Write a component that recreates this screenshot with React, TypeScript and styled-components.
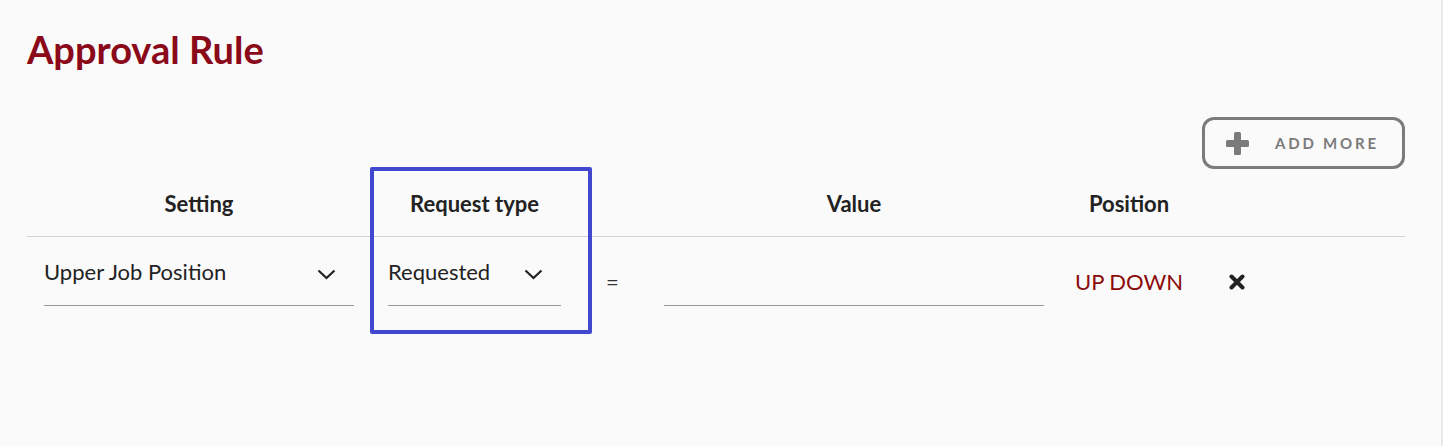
import styled, { createGlobalStyle } from 'styled-components';

const GlobalStyle = createGlobalStyle`
  html, body {
    margin: 0;
    padding: 0;
    background: #fafafa;
  }
  body {
    font-family: Lato, 'Open Sans', sans-serif;
    color: #222;
  }
`;

const Page = styled.div`
  box-sizing: border-box;
  min-height: 100vh;
  padding: 21px 36px 0 27px;
  border-right: 2px solid #e9e9e9;
`;

const Title = styled.h1`
  margin: 0;
  font-size: 38px;
  line-height: 56px;
  font-weight: 700;
  color: #8b0a1a;
`;

const Toolbar = styled.div`
  display: flex;
  justify-content: flex-end;
  margin-top: 40px;
  margin-bottom: -2px;
`;

const AddButton = styled.button`
  box-sizing: border-box;
  display: flex;
  align-items: center;
  width: 203px;
  height: 52px;
  padding: 0 0 0 21px;
  border: 3px solid #7b7b7b;
  border-radius: 12px;
  background: transparent;
  color: #7b7b7b;
  font-family: Lato, sans-serif;
  font-size: 15px;
  font-weight: 700;
  letter-spacing: 2.8px;
  cursor: pointer;

  svg {
    margin-right: 26px;
  }
`;

const RuleGrid = styled.div`
  display: grid;
  grid-template-columns: 344px 207px 69px 414px 136px 1fr;
  grid-template-rows: 70px 97px;
`;

const HeaderCell = styled.div<{ $col: number }>`
  grid-row: 1;
  grid-column: ${(p) => p.$col};
  display: flex;
  align-items: center;
  justify-content: center;
  padding-top: 3px;
  border-bottom: 1px solid #d3d3d3;
  font-size: 22px;
  font-weight: 700;
  color: #222;
  white-space: nowrap;
`;

const Cell = styled.div<{ $col: number; $top?: number; $justify?: string }>`
  grid-row: 2;
  grid-column: ${(p) => p.$col};
  display: flex;
  align-items: flex-start;
  justify-content: ${(p) => p.$justify || 'flex-start'};
  padding: ${(p) => p.$top ?? 17}px 17px 0;
`;

const Select = styled.div`
  flex: 1;
  display: flex;
  align-items: center;
  justify-content: space-between;
  height: 34px;
  padding-bottom: 17px;
  border-bottom: 1px solid #9a9a9a;
  font-size: 22px;
  color: #222;
  white-space: nowrap;

  svg {
    margin: 6px 18px 0 0;
  }
`;

const ValueInput = styled.div`
  flex: 1;
  height: 51px;
  margin-top: -11px;
  border-bottom: 1px solid #9a9a9a;
`;

const Equals = styled.span`
  font-size: 22px;
  line-height: 34px;
  color: #333;
`;

const PositionText = styled.span`
  font-size: 22px;
  line-height: 34px;
  color: #8b0a0a;
  white-space: nowrap;
`;

const CloseButton = styled.button`
  display: flex;
  align-items: center;
  height: 34px;
  margin-left: 15px;
  padding: 0;
  border: none;
  background: none;
  cursor: pointer;
`;

const Highlight = styled.div`
  grid-row: 1 / 3;
  grid-column: 2;
  margin: 0 -14px 0 -1px;
  border: 4px solid #4147cf;
  border-radius: 2px;
  pointer-events: none;
`;

function Chevron() {
  return (
    <svg width="19" height="11" viewBox="0 0 19 11">
      <polyline points="1.5,1.5 9.5,9 17.5,1.5" fill="none" stroke="#222" strokeWidth="2.2" />
    </svg>
  );
}

function PlusIcon() {
  return (
    <svg width="23" height="23" viewBox="0 0 23 23">
      <rect x="8" y="0" width="7" height="23" rx="1.5" fill="#7b7b7b" />
      <rect x="0" y="8" width="23" height="7" rx="1.5" fill="#7b7b7b" />
    </svg>
  );
}

function CloseIcon() {
  return (
    <svg width="16" height="16" viewBox="0 0 16 16">
      <path d="M2.5 2.5 L13.5 13.5 M13.5 2.5 L2.5 13.5" stroke="#222" strokeWidth="4" strokeLinecap="round" />
    </svg>
  );
}

export default function App() {
  return (
    <>
      <GlobalStyle />
      <Page>
        <Title>Approval Rule</Title>
        <Toolbar>
          <AddButton>
            <PlusIcon />
            ADD MORE
          </AddButton>
        </Toolbar>
        <RuleGrid>
          <HeaderCell $col={1}>Setting</HeaderCell>
          <HeaderCell $col={2}>Request type</HeaderCell>
          <HeaderCell $col={3} />
          <HeaderCell $col={4}>Value</HeaderCell>
          <HeaderCell $col={5}>Position</HeaderCell>
          <HeaderCell $col={6} />

          <Cell $col={1}>
            <Select>
              Upper Job Position
              <Chevron />
            </Select>
          </Cell>
          <Cell $col={2}>
            <Select>
              Requested
              <Chevron />
            </Select>
          </Cell>
          <Cell $col={3} $top={28} $justify="center">
            <Equals>=</Equals>
          </Cell>
          <Cell $col={4} $top={28}>
            <ValueInput />
          </Cell>
          <Cell $col={5} $top={28} $justify="center">
            <PositionText>UP DOWN</PositionText>
          </Cell>
          <Cell $col={6} $top={28}>
            <CloseButton aria-label="remove">
              <CloseIcon />
            </CloseButton>
          </Cell>

          <Highlight />
        </RuleGrid>
      </Page>
    </>
  );
}
